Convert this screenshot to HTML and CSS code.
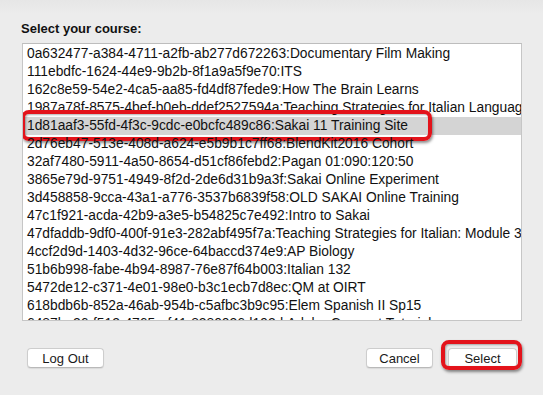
FILE: index.html
```html
<html>

<head>
  <title>Select your course</title>
  <link rel="stylesheet" href="styles.css">
</head>

<body>
  <div class="dialog">
    <div class="title">Select your course:</div>
    <div class="list">
      <div class="row">0a632477-a384-4711-a2fb-ab277d672263:Documentary Film Making</div>
      <div class="row">111ebdfc-1624-44e9-9b2b-8f1a9a5f9e70:ITS</div>
      <div class="row">162c8e59-54e2-4ca5-aa85-fd4df87fede9:How The Brain Learns</div>
      <div class="row">1987a78f-8575-4bef-b0eb-ddef2527594a:Teaching Strategies for Italian Language</div>
      <div class="row selected">1d81aaf3-55fd-4f3c-9cdc-e0bcfc489c86:Sakai 11 Training Site<span class="mark row-mark"></span></div>
      <div class="row">2d76eb47-513e-408d-a624-e5b9b1c7ff68:BlendKit2016 Cohort</div>
      <div class="row">32af7480-5911-4a50-8654-d51cf86febd2:Pagan 01:090:120:50</div>
      <div class="row">3865e79d-9751-4949-8f2d-2de6d31b9a3f:Sakai Online Experiment</div>
      <div class="row">3d458858-9cca-43a1-a776-3537b6839f58:OLD SAKAI Online Training</div>
      <div class="row">47c1f921-acda-42b9-a3e5-b54825c7e492:Intro to Sakai</div>
      <div class="row">47dfaddb-9df0-400f-91e3-282abf495f7a:Teaching Strategies for Italian: Module 3</div>
      <div class="row">4ccf2d9d-1403-4d32-96ce-64baccd374e9:AP Biology</div>
      <div class="row">51b6b998-fabe-4b94-8987-76e87f64b003:Italian 132</div>
      <div class="row">5472de12-c371-4e01-98e0-b3c1ecb7d8ec:QM at OIRT</div>
      <div class="row">618bdb6b-852a-46ab-954b-c5afbc3b9c95:Elem Spanish II Sp15</div>
      <div class="row">6487be26-f512-4765-af41-8280026d192d:Adobe Connect Tutorials</div>
    </div>
    <div class="buttons">
      <button class="btn logout">Log Out</button>
      <div class="spacer"></div>
      <button class="btn cancel">Cancel</button>
      <button class="btn select">Select<span class="mark btn-mark"></span></button>
    </div>
  </div>
</body>

</html>
```

FILE: styles.css
```css
    html, body {
      margin: 0;
      height: 100%;
      background: #ececec;
      font-family: "Liberation Sans", Arial, sans-serif;
      color: #111;
      overflow: hidden;
    }

    .dialog {
      padding: 21px 21px 0 22px;
      background: linear-gradient(#e6e6e6, #ececec 14px);
      height: 100%;
      box-sizing: border-box;
    }

    .title {
      font-size: 13px;
      font-weight: bold;
      line-height: 16px;
      margin-left: -1px;
      margin-bottom: 6px;
    }

    .list {
      height: 278px;
      border: 1px solid #c6c6c6;
      border-top-color: #bdbdbd;
      background: #fff;
      overflow: hidden;
      padding-top: 1px;
      box-sizing: border-box;
    }

    .row {
      position: relative;
      height: 18px;
      line-height: 18px;
      font-size: 13.8px;
      padding-left: 4px;
      white-space: nowrap;
    }

    .row.selected {
      background: #d4d4d4;
    }

    .mark {
      position: absolute;
      border: 4px solid #e3131b;
      border-radius: 8px;
      box-shadow: 1px 2px 3px rgba(0, 0, 0, 0.45), inset 1px 1px 2px rgba(0, 0, 0, 0.3);
      pointer-events: none;
    }

    .row-mark {
      left: -2px;
      top: -7px;
      width: 403px;
      height: 23px;
    }

    .buttons {
      display: flex;
      align-items: center;
      margin-top: 27px;
      padding: 0 5px 0 5px;
    }

    .spacer {
      flex: 1;
    }

    .btn {
      position: relative;
      height: 20px;
      padding: 0;
      border: 1px solid #cdcdcd;
      border-bottom-color: #b9b9b9;
      border-radius: 4px;
      background: #fff;
      box-shadow: 0 1px 1px rgba(0, 0, 0, 0.08);
      font-family: "Liberation Sans", Arial, sans-serif;
      font-size: 13px;
      color: #1a1a1a;
    }

    .logout {
      width: 77px;
    }

    .cancel {
      width: 67px;
      margin-right: 15px;
    }

    .select {
      width: 69px;
    }

    .btn-mark {
      left: -8px;
      top: -9px;
      width: 73px;
      height: 22px;
    }
```
